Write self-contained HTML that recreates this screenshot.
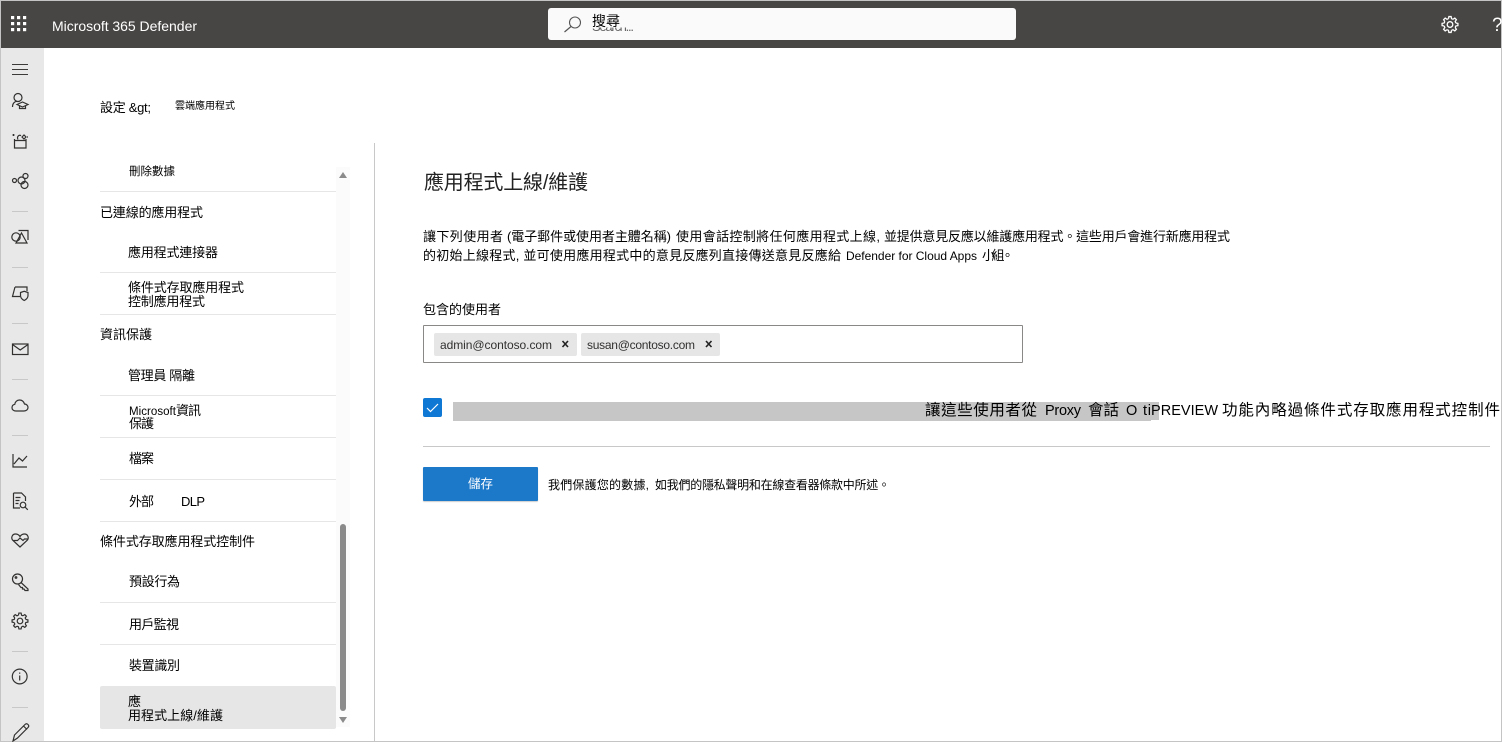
<!DOCTYPE html>
<html lang="zh-Hant">
<head>
<meta charset="utf-8">
<title>Microsoft 365 Defender</title>
<style>
html,body{margin:0;padding:0;background:#fff}
body{width:1502px;height:742px;position:relative;overflow:hidden;font-family:"Liberation Sans","Noto Sans CJK TC",sans-serif}
.b{position:absolute}
svg{position:absolute;left:0;top:0}
text{font-family:"Liberation Sans","Noto Sans CJK TC",sans-serif;fill:#000}
.ln{position:absolute;left:100px;width:236px;height:1px;background:#e6e6e6}
.ic{fill:none;stroke:#323130;stroke-width:1.2}
</style>
</head>
<body>
<div class="b" style="left:1px;top:1px;width:1500px;height:47px;background:#484644"></div>
<div class="b" style="left:1px;top:48px;width:43px;height:693px;background:#e8e8e8"></div>
<div class="b" style="left:548px;top:8px;width:468px;height:32px;background:#fafafa;border-radius:3px"></div>

<div class="b" style="left:336px;top:167px;width:14px;height:560px;background:#fbfbfb"></div>
<div class="b" style="left:340px;top:524px;width:6px;height:187px;background:#8a8a8a;border-radius:3px"></div>
<div class="b" style="left:374px;top:143px;width:1px;height:598px;background:#c8c8c8"></div>

<div class="ln" style="top:191px"></div>
<div class="ln" style="top:272px"></div>
<div class="ln" style="top:314px"></div>
<div class="ln" style="top:395px"></div>
<div class="ln" style="top:437px"></div>
<div class="ln" style="top:479px"></div>
<div class="ln" style="top:521px"></div>
<div class="ln" style="top:602px"></div>
<div class="ln" style="top:644px"></div>
<div class="b" style="left:100px;top:686px;width:236px;height:43px;background:#e6e6e6;border-radius:2px"></div>

<div class="b" style="left:423px;top:325px;width:598px;height:36px;border:1px solid #8a8886;border-radius:1px"></div>
<div class="b" style="left:434px;top:333px;width:143px;height:23px;background:#e6e6e6;border-radius:2px"></div>
<div class="b" style="left:581px;top:333px;width:139px;height:23px;background:#e6e6e6;border-radius:2px"></div>

<div class="b" style="left:423px;top:398px;width:19px;height:19px;background:#0f78d4;border-radius:2px"></div>
<div class="b" style="left:453px;top:402px;width:698px;height:19px;background:#c6c6c6"></div>
<div class="b" style="left:1151px;top:402px;width:8px;height:18px;background:#c6c6c6"></div>
<div class="b" style="left:423px;top:446px;width:1067px;height:1px;background:#c8c8c8"></div>
<div class="b" style="left:423px;top:467px;width:115px;height:34px;background:#1c78c9;border-radius:1px;box-shadow:0 1px 1px rgba(0,0,0,.2)"></div>

<div class="b" style="left:0;top:0;width:1500px;height:740px;border:1px solid #c4c4c4;pointer-events:none"></div>

<svg width="1502" height="742" viewBox="0 0 1502 742">
  <defs>
    <g id="gt"><path d="M5.8-1.55L7.92-1.11V1.11L5.8 1.55L5.2 3"/></g>
    <g id="gear">
      <use href="#gt"/>
      <use href="#gt" transform="rotate(45)"/>
      <use href="#gt" transform="rotate(90)"/>
      <use href="#gt" transform="rotate(135)"/>
      <use href="#gt" transform="rotate(180)"/>
      <use href="#gt" transform="rotate(225)"/>
      <use href="#gt" transform="rotate(270)"/>
      <use href="#gt" transform="rotate(315)"/>
      <circle r="2.800"/>
    </g>
  </defs>
  <!-- header -->
  <g fill="#fff">
    <rect x="11" y="16" width="3.200" height="3.200"/><rect x="17" y="16" width="3.200" height="3.200"/><rect x="23" y="16" width="3.200" height="3.200"/>
    <rect x="11" y="22" width="3.200" height="3.200"/><rect x="17" y="22" width="3.200" height="3.200"/><rect x="23" y="22" width="3.200" height="3.200"/>
    <rect x="11" y="28" width="3.200" height="3.200"/><rect x="17" y="28" width="3.200" height="3.200"/><rect x="23" y="28" width="3.200" height="3.200"/>
  </g>
  <text x="52" y="31" font-size="14" textLength="145" style="fill:#fff">Microsoft 365 Defender</text>
  <circle cx="575" cy="22.500" r="5.500" fill="none" stroke="#555" stroke-width="1.100"/>
  <path d="M571 26.500L564.500 32" fill="none" stroke="#555" stroke-width="1.200"/>
  <clipPath id="sc"><rect x="590" y="27.500" width="50" height="4"/></clipPath>
  <text x="592" y="31" font-size="13" textLength="42" clip-path="url(#sc)" style="fill:#666">Search...</text>
  <text x="592" y="26" font-size="14" textLength="28">搜尋</text>
  <use href="#gear" transform="translate(1450 24.500)" fill="none" stroke="#fff" stroke-width="1.300"/>
  <text x="1492" y="31" font-size="19" style="fill:#fff">?</text>

  <!-- sidebar -->
  <g fill="#3b3a39">
    <rect x="12" y="64" width="16" height="1"/><rect x="12" y="69" width="16" height="1"/><rect x="12" y="74" width="16" height="1"/>
    <rect x="12" y="211" width="16" height="1" fill="#c8c8c8"/><rect x="12" y="267" width="16" height="1" fill="#c8c8c8"/>
    <rect x="12" y="323" width="16" height="1" fill="#c8c8c8"/><rect x="12" y="379" width="16" height="1" fill="#c8c8c8"/>
    <rect x="12" y="435" width="16" height="1" fill="#c8c8c8"/><rect x="12" y="651" width="16" height="1" fill="#c8c8c8"/>
    <rect x="12" y="707" width="16" height="1" fill="#c8c8c8"/>
  </g>
  <g class="ic">
    <circle cx="18" cy="97.500" r="4"/>
    <path d="M12.500 107c0-3.500 2-5.500 4.500-5.700"/>
    <path d="M17 104.500l5.500-2.500 5.500 2.500-5.500 2.500z"/>
    <path d="M19.500 106v2.500h6V106"/>

    <path d="M14.500 140.500h11.500v7.500H14.500zM14.500 140.500v-1.500M26 140.500v-1.500"/>
    <path d="M18 139.500c-1.500-3 1-5 3-3.800M22 137l2-2 2 2-2 2z"/>
    <path d="M12.500 135h2M13.500 134v2M27 137h1"/>

    <circle cx="14.500" cy="180.500" r="2"/>
    <circle cx="25.500" cy="176" r="2.500"/>
    <circle cx="24.500" cy="185" r="3.500"/>
    <circle cx="21.500" cy="180.500" r="3.500"/>

    <circle cx="16" cy="237" r="4.200"/>
    <path d="M18.500 230.500h9.500v9.500"/>
    <path d="M21.500 233l5.500 10h-11z"/>

    <path d="M15 287h12v4M15 287l-2.500 9.500H20"/>
    <path d="M20.500 292.500l3.700-1.200 3.800 1.200v3c0 2.500-1.800 4-3.800 5-2-1-3.700-2.500-3.700-5z"/>

    <rect x="12.500" y="344" width="15.500" height="10.500"/>
    <path d="M12.500 344.500l7.700 5.500 7.800-5.500"/>

    <path d="M16 411h8c2.500 0 4-1.600 4-3.500s-1.500-3.500-3.500-3.500c-.8-2.500-2.600-4-5-4-2.600 0-4.500 2-4.700 4.300-1.700.3-2.800 1.700-2.800 3.400 0 1.800 1.600 3.300 4 3.300z"/>

    <path d="M13 454v13h14M14 464l5-6 3.500 3 4.500-5"/>

    <path d="M13.500 493h8l4 4v4M13.500 493v15h6.500M15.500 497.500h5M15.500 500.500h4M15.500 503.500h3"/>
    <circle cx="23" cy="505" r="2.800"/>
    <path d="M25 507l2.800 2.800"/>

    <path d="M20 547l-7-6.500c-2.500-2.500-.8-6.500 2.500-6.500 2 0 3.500 1 4.500 2.500 1-1.500 2.500-2.500 4.500-2.500 3.300 0 5 4 2.500 6.500z"/>
    <path d="M13.500 540.500h4l2.500-2.500 3 2.500 1.500-1.500h3"/>

    <circle cx="17.500" cy="579" r="5"/>
    <path d="M21 582.500l7 6.500v1.500h-3l-1-1.500h-1.500v-1.500h-1.500l-2.500-3"/>
    <circle cx="16" cy="577.500" r=".8"/>

    <use href="#gear" transform="translate(20 621)"/>

    <circle cx="19.700" cy="676.500" r="7.400"/>
    <path d="M19.700 675.500v5M19.700 672.500v1.200"/>

    <path d="M13 741l1.500-6L25 724.500c1-1 2-1 3 0s1 2 0 3L17.500 738zM23.500 726l3.500 3.500"/>
  </g>

  <!-- breadcrumb -->
  <text x="100" y="112" font-size="13" textLength="51">設定 &amp;gt;</text>
  <text x="175" y="109" font-size="10" textLength="60">雲端應用程式</text>

  <!-- nav list -->
  <g font-size="13">
    <text x="129" y="175" font-size="11.500" textLength="46">刪除數據</text>
    <text x="100" y="217" textLength="103">已連線的應用程式</text>
    <text x="128" y="257" textLength="90">應用程式連接器</text>
    <text x="128" y="292" textLength="116">條件式存取應用程式</text>
    <text x="128" y="306" textLength="77">控制應用程式</text>
    <text x="100" y="339" textLength="52">資訊保護</text>
    <text x="128" y="380" textLength="67">管理員 隔離</text>
    <text x="129" y="415" font-size="11.500" textLength="47">Microsoft</text>
    <text x="176" y="415" textLength="25">資訊</text>
    <text x="129" y="428" textLength="25">保護</text>
    <text x="129" y="463" textLength="25">檔案</text>
    <text x="129" y="506" textLength="25">外部</text>
    <text x="181" y="506" textLength="24">DLP</text>
    <text x="100" y="546" textLength="155">條件式存取應用程式控制件</text>
    <text x="129" y="586" textLength="51">預設行為</text>
    <text x="129" y="629" textLength="50">用戶監視</text>
    <text x="129" y="670" textLength="51">裝置識別</text>
    <text x="128" y="706">應</text>
    <text x="128" y="720" textLength="95">用程式上線/維護</text>
  </g>
  <path d="M339 178l4-6 4 6z" fill="#8a8a8a"/>
  <path d="M339 717l4 6 4-6z" fill="#8a8a8a"/>

  <!-- main -->
  <text x="424" y="189" font-size="20" textLength="164" style="fill:#222">應用程式上線/維護</text>
  <g font-size="13">
    <text x="423" y="241" textLength="80">讓下列使用者</text>
    <text x="507" y="241" textLength="164">(電子郵件或使用者主體名稱)</text>
    <text x="676" y="241" textLength="204">使用會話控制將任何應用程式上線,</text>
    <text x="884" y="241" textLength="346">並提供意見反應以維護應用程式。這些用戶會進行新應用程式</text>
    <text x="423" y="260" textLength="418">的初始上線程式, 並可使用應用程式中的意見反應列直接傳送意見反應給</text>
    <text x="846" y="260" font-size="12" textLength="131">Defender for Cloud Apps</text>
    <text x="982" y="260" textLength="32">小組。</text>
    <text x="423" y="314" textLength="78">包含的使用者</text>
  </g>
  <text x="440" y="349" font-size="12" textLength="112" style="fill:#323130">admin@contoso.com</text>
  <text x="587" y="349" font-size="12" textLength="108" style="fill:#323130">susan@contoso.com</text>
  <path d="M562.500 341l5.500 6M568 341l-5.500 6M706 341l5.500 6M711.500 341l-5.500 6" stroke="#222" stroke-width="1.600" fill="none"/>
  <path d="M427 408l3.500 3.500 7.500-7.500" fill="none" stroke="#fff" stroke-width="1.200"/>
  <g font-size="15.500">
    <text x="925" y="415" textLength="112">讓這些使用者從</text>
    <text x="1045" y="415" font-size="14.500" textLength="36">Proxy</text>
    <text x="1088" y="415" textLength="31">會話</text>
    <text x="1126" y="415" font-size="14.500" textLength="10">O</text>
    <text x="1143" y="415" font-size="14.500" textLength="8">ti</text>
    <text x="1151" y="415" font-size="14.500" textLength="67">PREVIEW</text>
    <text x="1222" y="415" textLength="278">功能內略過條件式存取應用程式控制件</text>
  </g>
  <text x="468" y="488" font-size="12.500" textLength="25" style="fill:#fff">儲存</text>
  <text x="548" y="489" font-size="12" textLength="101">我們保護您的數據,</text>
  <text x="655" y="489" font-size="12" textLength="235">如我們的隱私聲明和在線查看器條款中所述。</text>
</svg>
</body>
</html>
